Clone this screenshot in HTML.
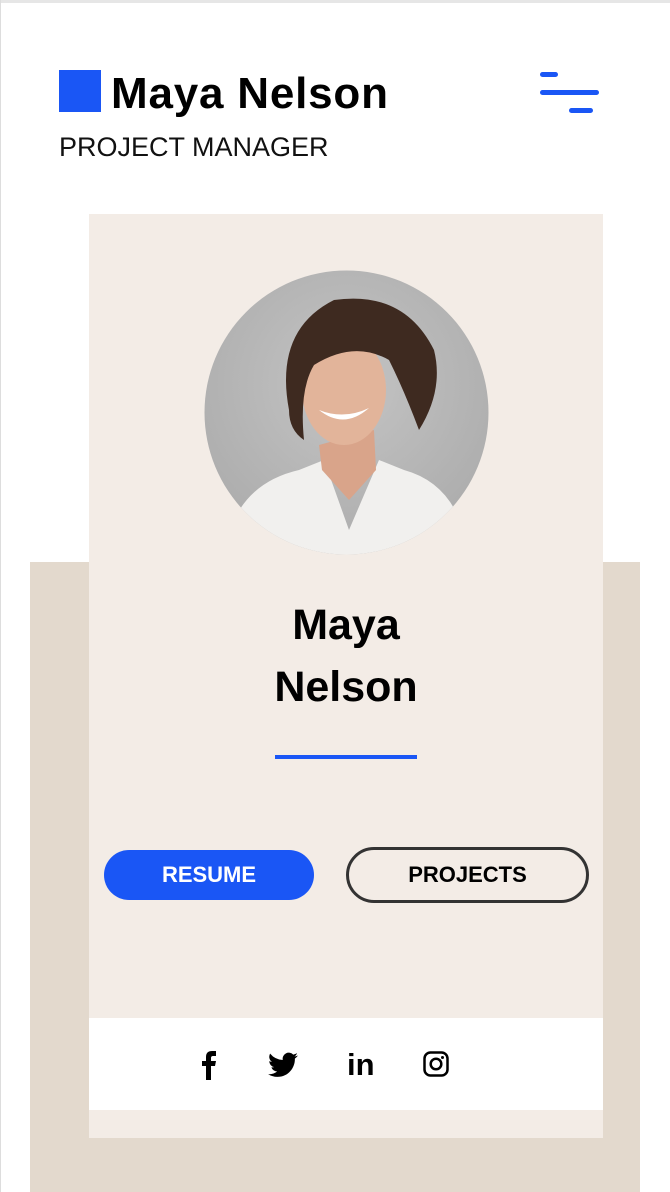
<!DOCTYPE html>
<html><head><meta charset="utf-8"><style>
*{margin:0;padding:0;box-sizing:border-box}
html,body{width:670px;height:1192px;overflow:hidden}
body{background:#fff;position:relative;font-family:"Liberation Sans",sans-serif}
.a{position:absolute}
</style></head><body>
<div class="a" style="left:0;top:0;width:670px;height:3px;background:#e6e6e6"></div>
<div class="a" style="left:0;top:0;width:1px;height:1192px;background:#ddd"></div>
<div class="a" style="left:59px;top:70px;width:42px;height:42px;background:#1a56f5"></div>
<div class="a" style="left:111px;top:69px;font-size:44px;font-weight:bold;letter-spacing:0.8px;color:#000">Maya Nelson</div>
<div class="a" style="left:59px;top:132px;font-size:27px;color:#111;font-weight:300;letter-spacing:0">PROJECT MANAGER</div>
<div class="a" style="left:540px;top:72px;width:18px;height:5px;border-radius:3px;background:#1a56f5"></div>
<div class="a" style="left:540px;top:90px;width:59px;height:5px;border-radius:3px;background:#1a56f5"></div>
<div class="a" style="left:569px;top:108px;width:24px;height:5px;border-radius:3px;background:#1a56f5"></div>

<div class="a" style="left:30px;top:562px;width:610px;height:640px;background:#e3d9cd"></div>
<div class="a" style="left:89px;top:214px;width:514px;height:924px;background:#f3ece6"></div>

<svg class="a" style="left:204px;top:270px" width="285" height="285" viewBox="0 0 285 285">
<defs><clipPath id="c"><circle cx="142.5" cy="142.5" r="142"/></clipPath>
<radialGradient id="g" cx="0.5" cy="0.4" r="0.7"><stop offset="0" stop-color="#c4c4c4"/><stop offset="1" stop-color="#a9a9a9"/></radialGradient></defs>
<g clip-path="url(#c)">
<rect width="285" height="285" fill="url(#g)"/>
<path d="M20 285 Q30 215 95 200 L120 190 L145 260 L175 190 L200 200 Q255 215 265 285Z" fill="#f1f0ee"/>
<path d="M115 175 L118 200 L145 230 L172 200 L170 160Z" fill="#d9a48a"/>
<ellipse cx="140" cy="120" rx="42" ry="55" fill="#e2b49a"/>
<path d="M85 140 Q70 60 130 30 Q200 20 230 80 Q240 120 215 160 Q200 120 185 90 Q150 70 110 95 Q95 120 100 170 Q85 160 85 140Z" fill="#3e2a20"/>
<path d="M115 140 Q140 160 165 138 Q140 150 115 140Z" fill="#fff"/>
</g></svg>

<div class="a" style="left:89px;top:594px;width:514px;text-align:center;font-size:43px;font-weight:bold;line-height:62px;color:#000">Maya<br>Nelson</div>
<div class="a" style="left:275px;top:755px;width:142px;height:4px;background:#1a56f5"></div>

<div class="a" style="left:104px;top:850px;width:210px;height:50px;border-radius:25px;background:#1a56f5;color:#fff;font-weight:bold;font-size:22px;text-align:center;line-height:50px">RESUME</div>
<div class="a" style="left:346px;top:847px;width:243px;height:56px;border-radius:28px;border:3px solid #333;color:#000;font-weight:bold;font-size:22px;text-align:center;line-height:50px">PROJECTS</div>

<div class="a" style="left:89px;top:1018px;width:514px;height:92px;background:#fff"></div>
<svg class="a" style="left:200px;top:1050px" width="20" height="30" viewBox="0 0 20 30"><path d="M6 30V16H2v-5h4V7q0-6 6-6h4v5h-3q-2 0-2 2v3h5l-1 5h-4v14z" fill="#000"/></svg>
<svg class="a" style="left:268px;top:1052px" width="30" height="26" viewBox="0 0 24 20"><path d="M24 2.4a10 10 0 0 1-2.8.8A5 5 0 0 0 23.3.5a10 10 0 0 1-3.1 1.2A4.9 4.9 0 0 0 11.8 6 14 14 0 0 1 1.7.9a4.9 4.9 0 0 0 1.5 6.6A5 5 0 0 1 1 6.9a4.9 4.9 0 0 0 3.9 4.8 5 5 0 0 1-2.2.1 4.9 4.9 0 0 0 4.6 3.4A9.9 9.9 0 0 1 0 17.3 14 14 0 0 0 7.5 19.5c9 0 14-7.5 14-14v-.6A10 10 0 0 0 24 2.4z" fill="#000"/></svg>
<div class="a" style="left:347px;top:1047px;font-size:31px;font-weight:bold;color:#000">in</div>
<svg class="a" style="left:423px;top:1051px" width="26" height="26" viewBox="0 0 26 26"><rect x="1.5" y="1.5" width="23" height="23" rx="6" fill="none" stroke="#000" stroke-width="2.5"/><circle cx="13" cy="13" r="5.3" fill="none" stroke="#000" stroke-width="2.5"/><circle cx="19.5" cy="6.5" r="1.5" fill="#000"/></svg>
</body></html>
